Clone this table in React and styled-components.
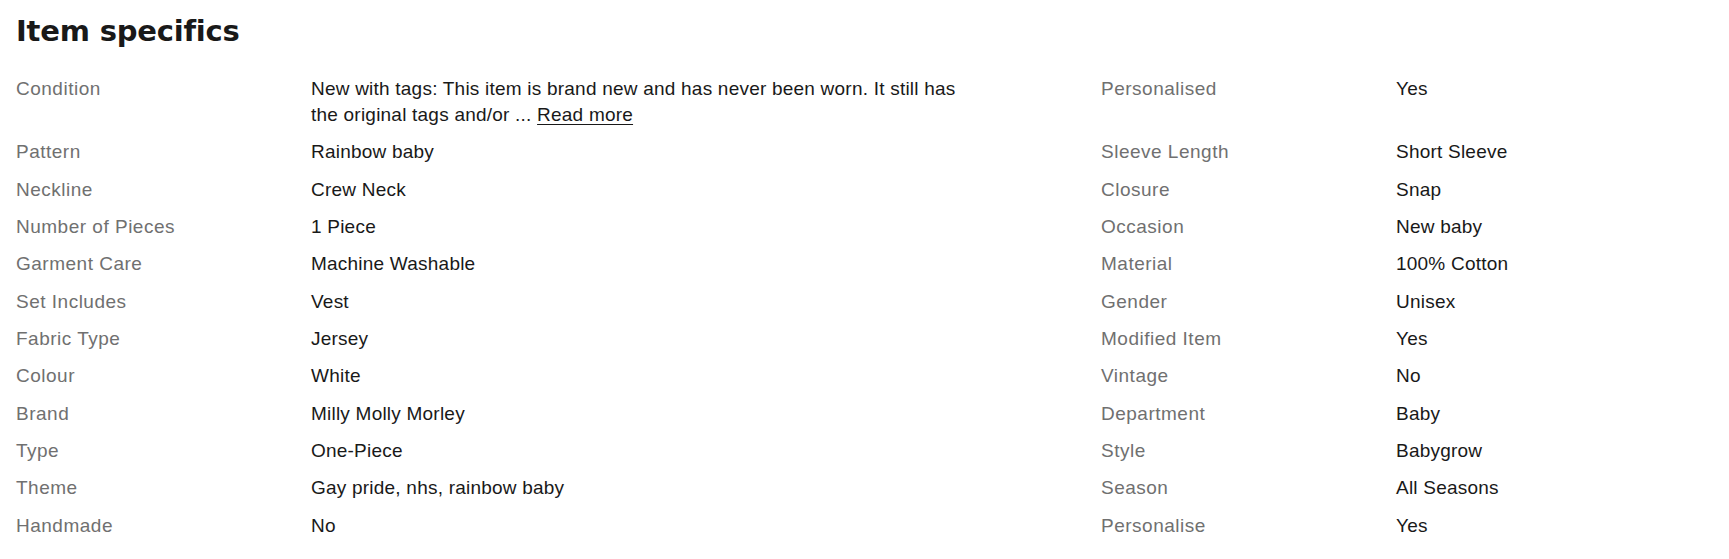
import styled, { createGlobalStyle } from "styled-components";

const GlobalStyle = createGlobalStyle`
  body {
    margin: 0;
    background: #ffffff;
    font-family: "Liberation Sans", Arial, sans-serif;
    color: #191919;
  }
`;

const left = [
  ["Condition", null],
  ["Pattern", "Rainbow baby"],
  ["Neckline", "Crew Neck"],
  ["Number of Pieces", "1 Piece"],
  ["Garment Care", "Machine Washable"],
  ["Set Includes", "Vest"],
  ["Fabric Type", "Jersey"],
  ["Colour", "White"],
  ["Brand", "Milly Molly Morley"],
  ["Type", "One-Piece"],
  ["Theme", "Gay pride, nhs, rainbow baby"],
  ["Handmade", "No"],
];

const right = [
  ["Personalised", "Yes"],
  ["Sleeve Length", "Short Sleeve"],
  ["Closure", "Snap"],
  ["Occasion", "New baby"],
  ["Material", "100% Cotton"],
  ["Gender", "Unisex"],
  ["Modified Item", "Yes"],
  ["Vintage", "No"],
  ["Department", "Baby"],
  ["Style", "Babygrow"],
  ["Season", "All Seasons"],
  ["Personalise", "Yes"],
];

export default function App() {
  return (
    <>
      <GlobalStyle />
      <Section>
        <Title>Item specifics</Title>
        <Columns>
          <List $width="1085px">
            {left.map(([label, value]) => (
              <Row key={label}>
                <Label>{label}</Label>
                {value ? (
                  <Value>{value}</Value>
                ) : (
                  <Value $wrap="670px">
                    New with tags: This item is brand new and has never been worn. It still has
                    the original tags and/or ... <ReadMore href="#">Read more</ReadMore>
                  </Value>
                )}
              </Row>
            ))}
          </List>
          <List>
            {right.map(([label, value], i) => (
              <Row key={label} $tall={i === 0}>
                <Label>{label}</Label>
                <Value>{value}</Value>
              </Row>
            ))}
          </List>
        </Columns>
      </Section>
    </>
  );
}

const Section = styled.section`
  padding: 0 16px;
`;

const Title = styled.h2`
  margin: 0;
  padding-top: 12px;
  font-family: "DejaVu Sans", "Liberation Sans", sans-serif;
  font-size: 29px;
  line-height: 38px;
  font-weight: 700;
  color: #191919;
  letter-spacing: -0.2px;
`;

const Columns = styled.div`
  display: flex;
  margin-top: 25.5px;
`;

const List = styled.dl`
  margin: 0;
  width: ${(p) => p.$width || "auto"};
  flex: ${(p) => (p.$width ? "none" : "1")};
  display: flex;
  flex-direction: column;
  gap: 10.85px;
`;

const Row = styled.div`
  display: grid;
  grid-template-columns: 295px 1fr;
  min-height: ${(p) => (p.$tall ? "53px" : "auto")};
  font-size: 19px;
  line-height: 26.5px;
`;

const Label = styled.dt`
  color: #707070;
  letter-spacing: 0.5px;
`;

const Value = styled.dd`
  margin: 0;
  color: #191919;
  letter-spacing: 0.22px;
  max-width: ${(p) => p.$wrap || "none"};
`;

const ReadMore = styled.a`
  color: #191919;
  text-decoration: underline;
  text-underline-offset: 3px;
`;
